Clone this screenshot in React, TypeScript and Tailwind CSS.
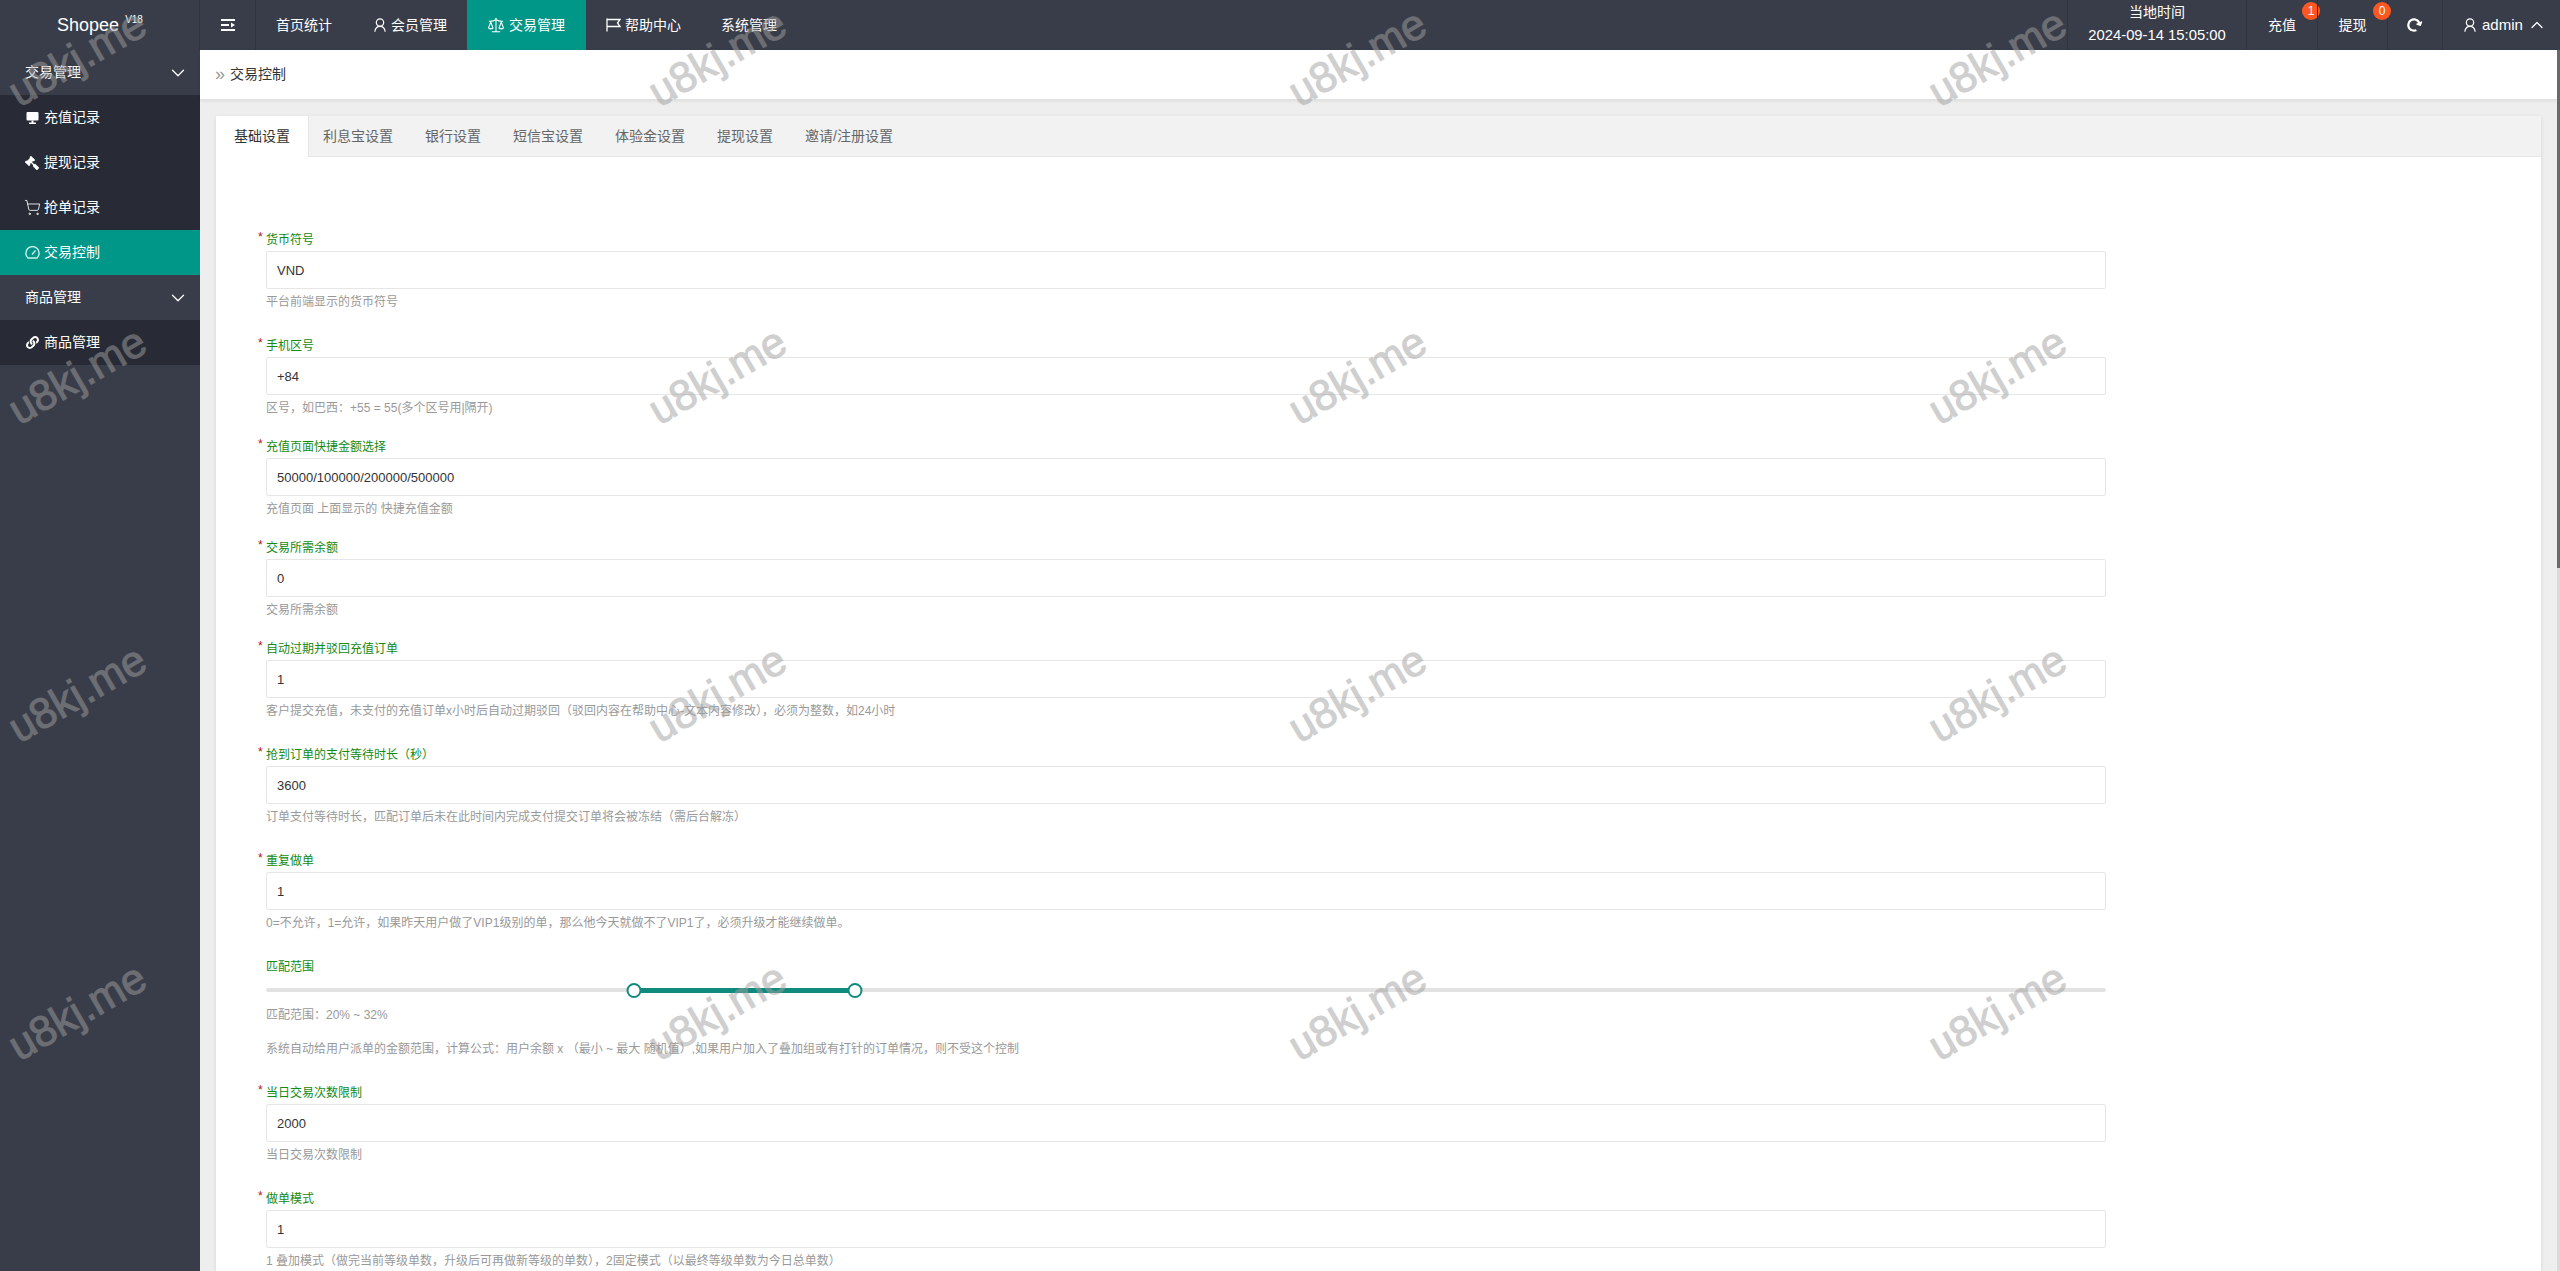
import { ChevronDown, ChevronUp, Scale, ShoppingCart } from "lucide-react"
import { FaGavel, FaLink, FaRedoAlt } from "react-icons/fa"

const fontStack = "font-['Liberation_Sans','Noto_Sans_CJK_SC',sans-serif]"

interface FieldProps {
  label: string;
  value: string;
  hint: string;
  gap: string;
}

const fields: FieldProps[] = [
  { label: "货币符号", value: "VND", hint: "平台前端显示的货币符号", gap: "mb-[25px]" },
  { label: "手机区号", value: "+84", hint: "区号，如巴西：+55 = 55(多个区号用|隔开)", gap: "mb-[20px]" },
  { label: "充值页面快捷金额选择", value: "50000/100000/200000/500000", hint: "充值页面 上面显示的 快捷充值金额", gap: "mb-[20px]" },
  { label: "交易所需余额", value: "0", hint: "交易所需余额", gap: "mb-[20px]" },
  { label: "自动过期并驳回充值订单", value: "1", hint: "客户提交充值，未支付的充值订单x小时后自动过期驳回（驳回内容在帮助中心-文本内容修改），必须为整数，如24小时", gap: "mb-[25px]" },
  { label: "抢到订单的支付等待时长（秒）", value: "3600", hint: "订单支付等待时长，匹配订单后未在此时间内完成支付提交订单将会被冻结（需后台解冻）", gap: "mb-[25px]" },
  { label: "重复做单", value: "1", hint: "0=不允许，1=允许，如果昨天用户做了VIP1级别的单，那么他今天就做不了VIP1了，必须升级才能继续做单。", gap: "mb-[26px]" },
]

const fieldsAfter: FieldProps[] = [
  { label: "当日交易次数限制", value: "2000", hint: "当日交易次数限制", gap: "mb-[25px]" },
  { label: "做单模式", value: "1", hint: "1 叠加模式（做完当前等级单数，升级后可再做新等级的单数），2固定模式（以最终等级单数为今日总单数）", gap: "mb-[25px]" },
]

const tabs = ["利息宝设置", "银行设置", "短信宝设置", "体验金设置", "提现设置", "邀请/注册设置"]

const UserIcon = () => (
  <svg width="12" height="14" viewBox="0 0 12 14" fill="none" stroke="white" strokeWidth="1.2">
    <circle cx="6" cy="4.5" r="3.7" />
    <path d="M0.8 13.7 C1.2 10.5 3 8.3 6 8.3 S10.8 10.5 11.2 13.7" />
  </svg>
)

const Field = ({ label, value, hint, gap }: FieldProps) => (
  <div className={gap}>
    <div className="flex h-[21px] pt-[1px] -ml-[8px] text-[12px] leading-[18px]">
      <span className="w-[8px] text-[#b31212] -mt-[3px]">*</span>
      <span className="text-[#148a14]">{label}</span>
    </div>
    <div className="h-[38px] border border-[#e6e6e6] rounded-[2px] bg-white pl-[10px] pt-[1px] flex items-center text-[13px] text-[#333]">{value}</div>
    <div className="pt-[4px] h-[22px] text-[12px] leading-[18px] text-[#999]">{hint}</div>
  </div>
)

const RangeSlider = () => (
  <div className="mb-[25px] text-[12px] leading-[18px]">
    <div className="text-[#148a14]">匹配范围</div>
    <div className="relative mt-[6px] h-[16px] flex items-center">
      <div className="w-full h-[4px] rounded-full bg-[#e2e2e2]" />
      <div className="absolute left-[20%] w-[12%] h-[5px] bg-[#0f8a7e]" />
      <div className="absolute left-[20%] -translate-x-1/2 w-[15px] h-[15px] rounded-full border-2 border-[#0f8a7e] bg-white" />
      <div className="absolute left-[32%] -translate-x-1/2 w-[15px] h-[15px] rounded-full border-2 border-[#0f8a7e] bg-white" />
    </div>
    <div className="mt-[8px] text-[#999]">匹配范围：20% ~ 32%</div>
    <div className="mt-[16px] text-[#999]">系统自动给用户派单的金额范围，计算公式：用户余额 x （最小 ~ 最大 随机值）,如果用户加入了叠加组或有打针的订单情况，则不受这个控制</div>
  </div>
)

const Header = () => (
  <div className="h-[50px] shrink-0 flex bg-[#393d49] text-white text-[14px]">
    <div className="w-[200px] border-r border-[#31343f] flex items-center justify-center pr-[1px]">
      <span className="text-[18px] ml-[2px]">Shopee</span>
      <span className="text-[10px] ml-[6px] -mt-[11px]">V18</span>
    </div>
    <div className="w-[56px] border-r border-[#31343f] flex items-center justify-center">
      <svg width="14" height="12" viewBox="0 0 14 12" fill="white">
        <rect x="0" y="0" width="14" height="2" />
        <rect x="0" y="5" width="8" height="2" />
        <path d="M10 3.5 L14 6 L10 8.5 Z" />
        <rect x="0" y="10" width="14" height="2" />
      </svg>
    </div>
    <div className="flex items-center px-5 h-full">首页统计</div>
    <div className="flex items-center pl-[22px] pr-5 gap-[5px] h-full">
      <UserIcon />
      会员管理
    </div>
    <div className="flex items-center pl-5 pr-[21px] gap-[4px] h-full bg-[#009688]">
      <Scale size={18} strokeWidth={1.4} />
      交易管理
    </div>
    <div className="flex items-center px-5 gap-[4px] h-full">
      <svg width="15" height="14" viewBox="0 0 15 14" fill="none" stroke="white" strokeWidth="1.3">
        <path d="M1 0.5 V13.5" />
        <path d="M1 1.5 H14 L11.5 5 L14 8.5 H1" />
      </svg>
      帮助中心
    </div>
    <div className="flex items-center px-5 h-full">系统管理</div>
    <div className="ml-auto flex h-full">
      <div className="w-[179px] border-l border-[#31343f] flex flex-col items-center">
        <div className="mt-[3px] leading-[18px]">当地时间</div>
        <div className="mt-[5px] leading-[18px] text-[14.8px]">2024-09-14 15:05:00</div>
      </div>
      <div className="relative w-[71px] border-l border-[#31343f] flex items-center justify-center">
        充值
        <span className="absolute left-[55px] top-[2px] w-[18px] h-[18px] rounded-full bg-[#ff5722] text-[12px] flex items-center justify-center">1</span>
      </div>
      <div className="relative w-[70px] border-l border-[#31343f] flex items-center justify-center">
        提现
        <span className="absolute left-[55px] top-[2px] w-[18px] h-[18px] rounded-full bg-[#ff5722] text-[12px] flex items-center justify-center">0</span>
      </div>
      <div className="w-[55px] border-l border-[#31343f] flex items-center justify-center">
        <FaRedoAlt size={14} className="rotate-[20deg] -ml-[2px]" />
      </div>
      <div className="w-[118px] border-l border-[#31343f] flex items-center pl-[21px]">
        <UserIcon />
        <span className="ml-[6px] text-[15px]">admin</span>
        <ChevronUp size={20} strokeWidth={1.5} className="ml-[4px]" />
      </div>
    </div>
  </div>
)

const SubItem = ({ icon, label, active }: { icon: React.ReactNode; label: string; active?: boolean }) => (
  <div className={active ? "h-[45px] flex items-center pl-[25px] gap-[5px] bg-[#009688]" : "h-[45px] flex items-center pl-[25px] gap-[5px] bg-[#282b35]"}>
    <span className="w-[14px] flex justify-center">{icon}</span>
    {label}
  </div>
)

const Sidebar = () => (
  <div className="w-[200px] shrink-0 bg-[#393d49] text-white text-[14px]">
    <div className="h-[45px] flex items-center justify-between pl-[25px] pr-[11px]">
      交易管理
      <ChevronDown size={22} strokeWidth={1.4} />
    </div>
    <SubItem
      label="充值记录"
      icon={
        <svg width="13" height="14" viewBox="0 0 13 14" fill="white">
          <rect x="0.5" y="1" width="12" height="8.5" rx="1" />
          <rect x="5.5" y="9.5" width="2" height="2.5" />
          <rect x="3" y="11.5" width="7" height="1.5" />
        </svg>
      }
    />
    <SubItem label="提现记录" icon={<FaGavel size={14} className="-scale-x-100" />} />
    <SubItem label="抢单记录" icon={<ShoppingCart size={17} strokeWidth={1.2} className="shrink-0" />} />
    <SubItem
      label="交易控制"
      active
      icon={
        <svg width="15" height="13" viewBox="0 0 15 13" fill="none" stroke="#c9f2ea" strokeWidth="1.4" className="shrink-0">
          <path d="M3 12 H12 A6.6 6.6 0 1 0 3 12 Z" />
          <path d="M7 8.5 L10.5 4.5" />
        </svg>
      }
    />
    <div className="h-[45px] flex items-center justify-between pl-[25px] pr-[11px]">
      商品管理
      <ChevronDown size={22} strokeWidth={1.4} />
    </div>
    <SubItem label="商品管理" icon={<FaLink size={13} />} />
  </div>
)

const Watermarks = () => (
  <div className="absolute left-[-243px] top-[-101px] grid grid-cols-[repeat(4,640px)] grid-rows-[repeat(4,317.75px)] place-items-center pointer-events-none">
    {Array.from({ length: 16 }).map((_, i) => (
      <span key={i} className="-rotate-[30deg] text-[43px] leading-none whitespace-nowrap text-[#a0a0a0] opacity-50 [-webkit-text-stroke:1px_#a0a0a0] font-['Liberation_Sans',sans-serif]">u8kj.me</span>
    ))}
  </div>
)

const App = () => {
  return (
    <div className={`relative h-[1271px] overflow-hidden flex flex-col bg-[#eeeeee] ${fontStack}`}>
      <Header />
      <div className="flex flex-1 min-h-0">
        <Sidebar />
        <div className="flex-1 min-w-0 flex flex-col">
          <div className="h-[50px] shrink-0 bg-white border-b border-[#e2e2e2] shadow-[0_1px_3px_rgba(0,0,0,0.08)] flex items-center pl-[15px] text-[14px] text-[#333]">
            <span className="text-[#999] text-[18px] w-[15px]">»</span>
            交易控制
          </div>
          <div className="flex-1 min-h-0 p-[16px] pb-0 overflow-hidden">
            <div className="h-full bg-white shadow-[0_1px_4px_rgba(0,0,0,0.1)]">
              <div className="h-[41px] flex bg-[#f2f2f2] border-b border-[#e6e6e6] text-[14px] text-[#666]">
                <div className="w-[93px] h-[41px] bg-white border-r border-[#e6e6e6] flex items-center justify-center text-[#333]">基础设置</div>
                <div className="flex ml-[-2px]">
                  {tabs.map(t => (
                    <div key={t} className="px-[16px] flex items-center">{t}</div>
                  ))}
                </div>
              </div>
              <div className="pt-[73px] pl-[50px] w-[1890px]">
                {fields.map(f => (
                  <Field key={f.label} {...f} />
                ))}
                <RangeSlider />
                {fieldsAfter.map(f => (
                  <Field key={f.label} {...f} />
                ))}
              </div>
            </div>
          </div>
        </div>
        <div className="w-[3px] shrink-0 bg-[#dadada]">
          <div className="h-[518px] bg-[#6a6a6a]" />
        </div>
      </div>
      <Watermarks />
    </div>
  );
};

export default App
